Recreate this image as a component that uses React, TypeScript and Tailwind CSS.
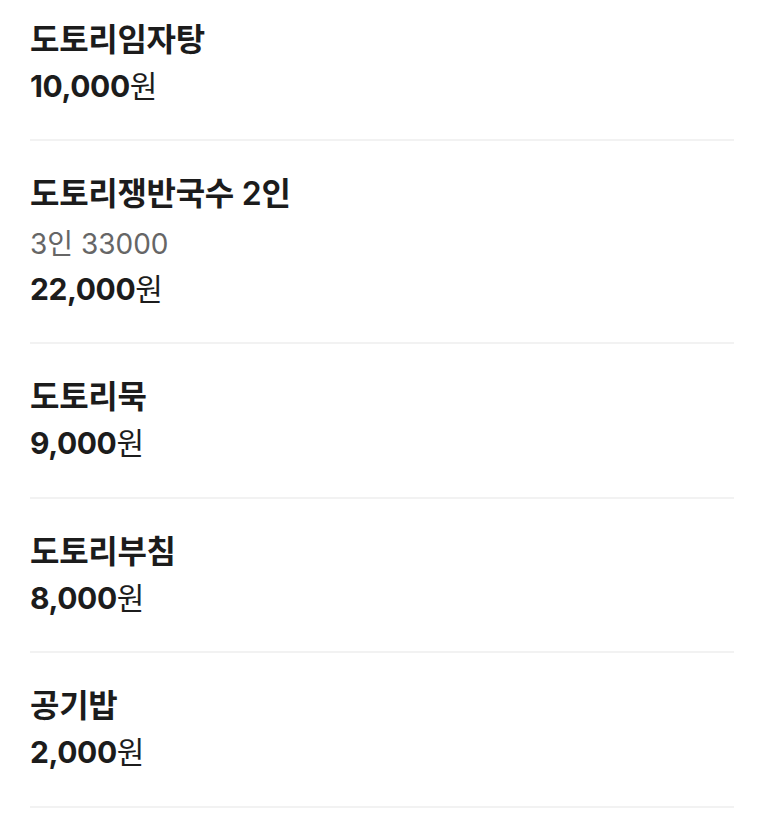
type MenuItem = {
  name: string;
  desc?: string;
  price: string;
};

const items: MenuItem[] = [
  { name: '도토리임자탕', price: '10,000' },
  { name: '도토리쟁반국수 2인', desc: '3인 33000', price: '22,000' },
  { name: '도토리묵', price: '9,000' },
  { name: '도토리부침', price: '8,000' },
  { name: '공기밥', price: '2,000' },
];

export default function App() {
  return (
    <div
      className="min-h-screen bg-white pl-[30px] pr-[24px] text-[#1c1c1c]"
      style={{ fontFamily: 'Inter, "Noto Sans CJK KR", sans-serif' }}
    >
      <ul>
        {items.map((item, i) => (
          <li
            key={i}
            className={`border-b-2 border-[#f2f2f2] ${i === 0 ? 'pt-[17px] pb-[29px]' : 'pt-[30px] pb-[30px]'}`}
          >
            <div className="text-[32px] leading-[46px] font-semibold tracking-[-0.3px]">{item.name}</div>
            {item.desc && (
              <div className="mt-[5px] text-[28px] leading-[44px] text-[#666]">{item.desc}</div>
            )}
            <div className="text-[30px] leading-[46.6px] tracking-[-0.4px]">
              <span className="font-bold">{item.price}</span>
              <span className="font-normal">원</span>
            </div>
          </li>
        ))}
      </ul>
    </div>
  );
}
